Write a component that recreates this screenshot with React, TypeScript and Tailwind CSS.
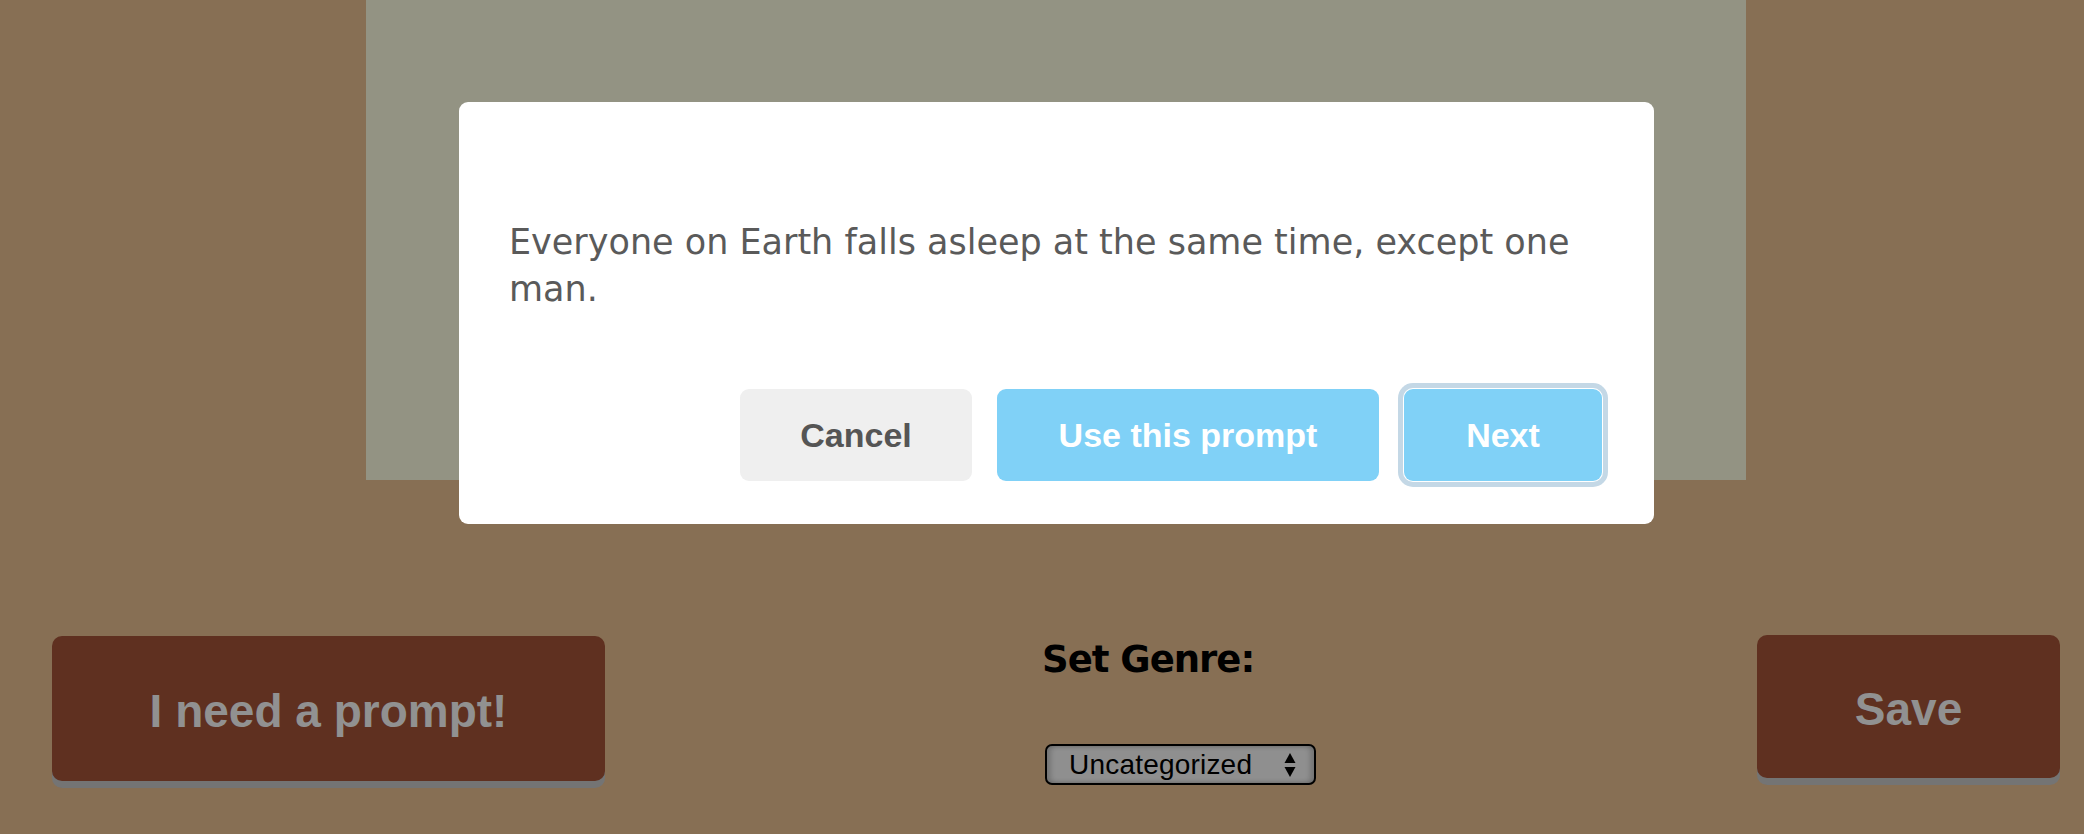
import React from "react";

export default function App() {
  return (
    <div
      className="relative w-[2084px] h-[834px] overflow-hidden bg-[#876f54]"
      style={{ fontFamily: '"Liberation Sans", Arial, sans-serif' }}
    >
      {/* gray panel behind */}
      <div className="ml-[366px] w-[1380px] h-[480px] bg-[#939383]" />

      {/* bottom row */}
      <div className="flex items-start mt-[156px]">
        <button className="ml-[52px] w-[553px] h-[145px] rounded-[10px] bg-[#5f3020] shadow-[0_7px_0_#747474] text-[46px] font-bold text-[#919191] flex items-center justify-center pt-[6px]">
          I need a prompt!
        </button>

        <div className="ml-[437px] flex flex-col items-start">
          <div
            className="mt-[5px] text-[37px] leading-none font-bold text-black tracking-[-1px]"
            style={{ fontFamily: '"DejaVu Sans", Verdana, sans-serif' }}
          >
            Set Genre:
          </div>
          <div className="mt-[66px] ml-[3px] w-[271px] h-[41px] rounded-[7px] border-2 border-black bg-[#8f8f8f] shadow-[inset_4px_0_5px_rgba(0,0,0,0.18),inset_-4px_0_5px_rgba(0,0,0,0.18)] flex items-center pl-[22px] pr-[16px]">
            <span className="text-[28px] leading-none text-black flex-1 tracking-[0.2px]">
              Uncategorized
            </span>
            <svg width="12" height="26" viewBox="0 0 12 26" className="mr-[2px]">
              <polygon points="6,1 11.5,11 0.5,11" fill="#000" />
              <polygon points="0.5,15 11.5,15 6,25" fill="#000" />
            </svg>
          </div>
        </div>

        <button className="ml-auto mr-[24px] -mt-px w-[303px] h-[143px] rounded-[10px] bg-[#5f3020] shadow-[0_7px_0_#747474] text-[46px] font-bold text-[#919191] flex items-center justify-center pt-[6px]">
          Save
        </button>
      </div>

      {/* modal */}
      <div className="absolute left-[459px] top-[102px] w-[1195px] h-[422px] rounded-[9px] bg-white pt-[117px] pl-[50px] pr-[52px] flex flex-col">
        <p
          className="text-[35px] leading-[47px] text-[#5a5a5a] w-[1095px]"
          style={{ fontFamily: '"DejaVu Sans", Verdana, Tahoma, sans-serif' }}
        >
          Everyone on Earth falls asleep at the same time, except one man.
        </p>
        <div className="mt-auto mb-[43px] flex justify-end gap-[25px]">
          <button className="w-[232px] h-[92px] rounded-[9px] bg-[#efefef] text-[34px] font-bold text-[#555555]">
            Cancel
          </button>
          <button className="w-[382px] h-[92px] rounded-[9px] bg-[#80d1f7] text-[34px] font-bold text-white">
            Use this prompt
          </button>
          <button className="w-[198px] h-[92px] rounded-[9px] bg-[#80d1f7] text-[34px] font-bold text-white ring-[5px] ring-[#c4d8e6] ring-offset-1 ring-offset-white">
            Next
          </button>
        </div>
      </div>
    </div>
  );
}
